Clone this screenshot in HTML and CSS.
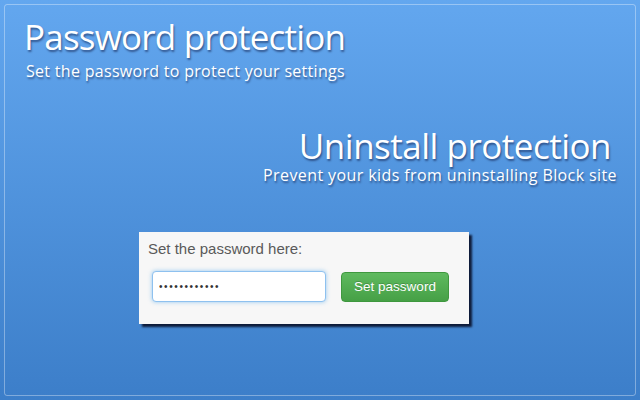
FILE: index.html
```html
<!DOCTYPE html>
<html lang="en">
<head>
    <meta charset="UTF-8">
    <title>Password protection</title>
    <link rel="stylesheet" href="styles.css">
</head>
<body>

<div class="screen">
    <div class="frame">
        <!-- password protection -->
        <div class="intro">
            <h1>Password protection</h1>
            <p>Set the password to protect your settings</p>
        </div>

        <!-- uninstall protection -->
        <div class="intro right">
            <h1>Uninstall protection</h1>
            <p>Prevent your kids from uninstalling Block site</p>
        </div>

        <div class="panel">
            <label for="password">Set the password here:</label>
            <div class="row">
                <input type="password" id="password" value="............">
                <button>Set password</button>
            </div>
        </div>
    </div>
</div>

</body>
</html>
```
FILE: styles.css
```css
body {
    margin: 0;
    font-family: "Open Sans", sans-serif;
}
.screen {
    width: 640px;
    height: 400px;
    padding: 4px;
    box-sizing: border-box;
    background: linear-gradient(#63a7ef, #3c7ec9);
}
.frame {
    height: 100%;
    box-sizing: border-box;
    border: 1px solid rgba(255, 255, 255, 0.35);
    border-radius: 3px;
}
.intro {
    color: white;
    padding-left: 19px;
    text-shadow: 1px 2px 2px rgba(0, 0, 40, 0.45);
}
.intro h1 {
    margin: 10px 0 0;
    font-size: 35px;
    font-weight: normal;
    letter-spacing: -0.8px;
    line-height: 44px;
}
.intro p {
    margin: 2px 0 0 2px;
    font-size: 16px;
    letter-spacing: 0.3px;
    line-height: 20px;
}
.right {
    text-align: right;
    padding: 0 18px 0 0;
    margin-top: 46px;
}
.right h1 {
    margin: 0 6px 0 0;
    letter-spacing: -0.5px;
    line-height: 38px;
}
.right p {
    margin: 0;
    letter-spacing: 0.4px;
}
.panel {
    width: 330px;
    box-sizing: border-box;
    margin: 47px 0 0 134px;
    padding: 8px 9px 22px;
    background-color: #f7f7f7;
    box-shadow: 3px 3px 2px rgba(0, 0, 20, 0.8);
    font-family: "Liberation Sans", Arial, sans-serif;
}
.panel label {
    display: block;
    font-size: 15px;
    color: #5a5a5a;
    margin-bottom: 14px;
}
.row {
    display: flex;
    align-items: center;
    gap: 15px;
    padding-left: 4px;
}
input[type="password"] {
    width: 174px;
    height: 31px;
    box-sizing: border-box;
    padding: 4px 6px;
    border: 1px solid #8ec1ef;
    border-radius: 4px;
    box-shadow: 0 0 4px rgba(82, 168, 236, 0.6);
    font-size: 10px;
    letter-spacing: 1.6px;
    color: #333;
    outline: none;
}
button {
    width: 108px;
    height: 30px;
    background: linear-gradient(#5fba5f, #46a046);
    color: white;
    border: 1px solid #3f983f;
    border-radius: 4px;
    font-family: "Liberation Sans", Arial, sans-serif;
    font-size: 13.5px;
    text-shadow: 0 -1px 0 rgba(0, 0, 0, 0.2);
    cursor: pointer;
}
```
